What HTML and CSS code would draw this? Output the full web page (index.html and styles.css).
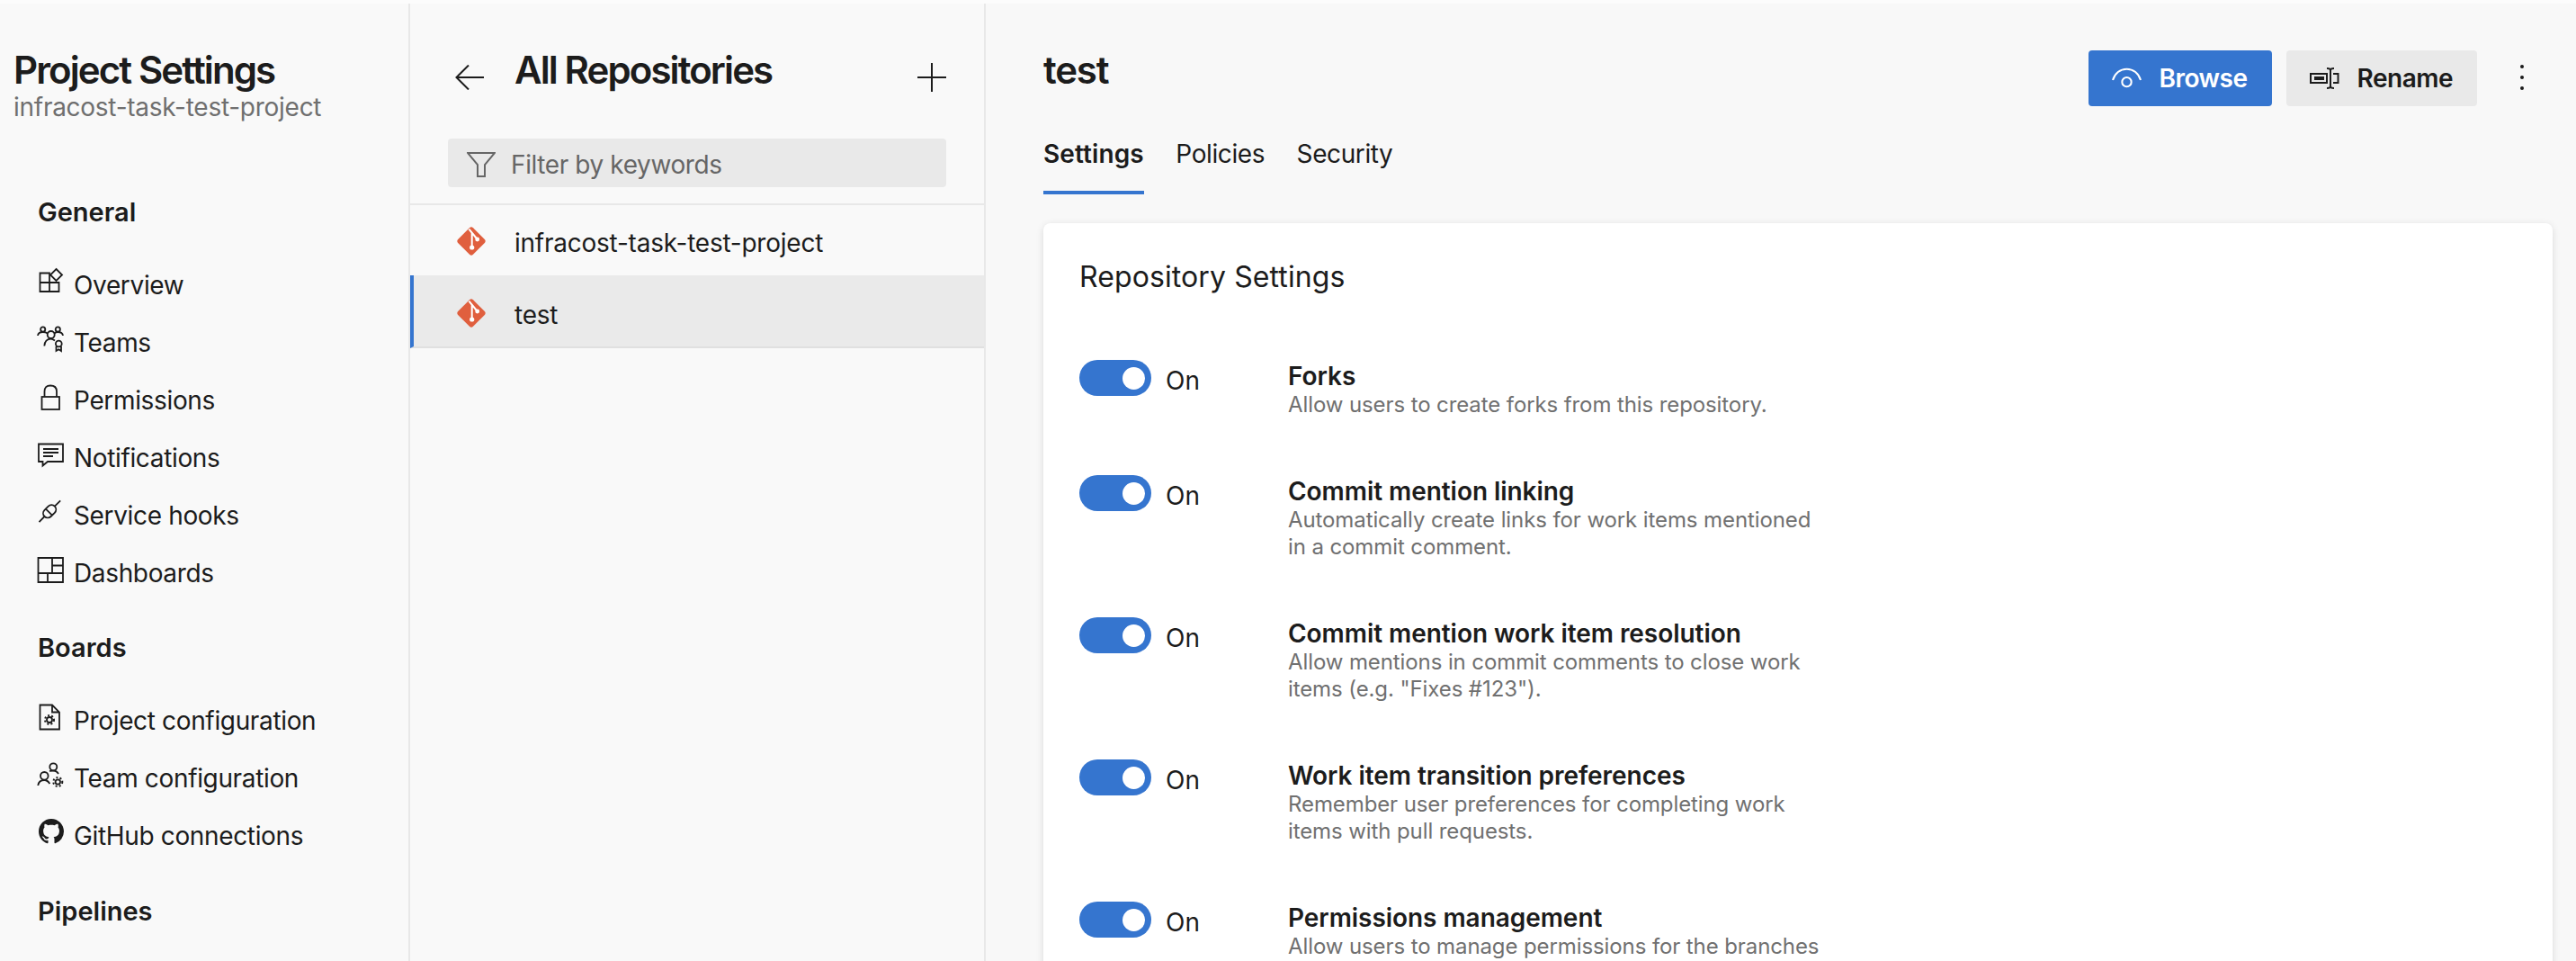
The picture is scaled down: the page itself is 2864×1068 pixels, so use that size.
FILE: index.html
```html
<!DOCTYPE html>
<html lang="en">
<head>
  <meta charset="UTF-8" />
  <title>Repository Settings</title>
  <link rel="stylesheet" href="styles.css">
</head>
<body>

<div class="app">
  <div class="sidebar">
    <div class="project-title">Project Settings</div>
    <div class="project-name">infracost-task-test-project</div>

    <div class="nav-heading first">General</div>
    <a class="nav-item">
      <svg class="nav-icon" viewBox="0 0 28 28"><path d="M1.500 5.500H12V16H22.500V26H1.500Z M1.500 16H12 M12 16V26"/><path d="M19.500 1L26 7.500L19.500 14L13 7.500Z"/></svg>
      Overview
    </a>
    <a class="nav-item">
      <svg class="nav-icon" viewBox="0 0 28 28"><circle cx="4.700" cy="4" r="2.600"/><circle cx="21.300" cy="4" r="2.600"/><circle cx="13.700" cy="10" r="4"/><circle cx="22.300" cy="20" r="3.400"/><path d="M-1 11Q-.5 7 4.700 7Q8 7 9.800 8.500M27 11Q26.500 7 21.300 7Q19 7 17.500 8.500M6.300 22.500Q7 14.700 13.500 14.700Q15.500 14.700 18 16.500M19.500 23V28L22.300 26.300L25 28V23"/></svg>
      Teams
    </a>
    <a class="nav-item">
      <svg class="nav-icon" viewBox="0 0 28 28"><rect x="3.500" y="15" width="19.500" height="14"/><path d="M6.500 15V9Q6.500 2.500 13 2.500Q20 2.500 20 9V15"/></svg>
      Permissions
    </a>
    <a class="nav-item">
      <svg class="nav-icon" viewBox="0 0 28 28"><path d="M0 3.500H27V23H10L4.500 27.500V23H0Z M5 9H22 M5 13H22 M5 17H16"/></svg>
      Notifications
    </a>
    <a class="nav-item">
      <svg class="nav-icon" viewBox="0 0 28 28"><g transform="rotate(-45 12.5 14)"><rect x="4" y="9" width="16" height="10" rx="5"/><path d="M11 9V19 M-4.500 14H4 M20 14H29"/></g></svg>
      Service hooks
    </a>
    <a class="nav-item">
      <svg class="nav-icon" viewBox="0 0 28 28"><path d="M-.5 2H27V29H-.5Z M15 2V19 M-.5 19H27 M15 10.500H27 M10 19V29"/></svg>
      Dashboards
    </a>

    <div class="nav-heading">Boards</div>
    <a class="nav-item">
      <svg class="nav-icon" viewBox="0 0 28 28"><path d="M1.500 1.500H15L23 9.500V28.500H1.500Z M15 1.500V9.500H23"/><circle cx="12" cy="18" r="3"/><circle class="teeth" cx="12" cy="18" r="5"/></svg>
      Project configuration
    </a>
    <a class="nav-item">
      <svg class="nav-icon" viewBox="0 0 28 28"><circle cx="16.300" cy="6.300" r="4"/><circle cx="6.300" cy="16.300" r="4.300"/><path d="M-.7 27Q0 21 6.300 21Q10 21 12.300 25M12 11Q14 10.500 16.300 10.500Q20 10.500 22 14"/><circle cx="21.300" cy="23" r="2.700"/><circle class="teeth" cx="21.300" cy="23" r="5"/></svg>
      Team configuration
    </a>
    <a class="nav-item">
      <svg class="nav-icon solid" viewBox="0 0 16 16"><path d="M8 0C3.58 0 0 3.58 0 8c0 3.54 2.29 6.53 5.47 7.59.4.07.55-.17.55-.38 0-.19-.01-.82-.01-1.49-2.01.37-2.53-.49-2.69-.94-.09-.23-.48-.94-.82-1.13-.28-.15-.68-.52-.01-.53.63-.01 1.08.58 1.23.82.72 1.21 1.87.87 2.33.66.07-.52.28-.87.51-1.07-1.78-.2-3.64-.89-3.64-3.95 0-.87.31-1.59.82-2.15-.08-.2-.36-1.02.08-2.12 0 0 .67-.21 2.2.82.64-.18 1.32-.27 2-.27.68 0 1.36.09 2 .27 1.53-1.04 2.2-.82 2.2-.82.44 1.1.16 1.92.08 2.12.51.56.82 1.27.82 2.15 0 3.07-1.87 3.75-3.65 3.95.29.25.54.73.54 1.48 0 1.07-.01 1.93-.01 2.2 0 .21.15.46.55.38A8.013 8.013 0 0016 8c0-4.42-3.58-8-8-8z"/></svg>
      GitHub connections
    </a>

    <div class="nav-heading">Pipelines</div>
  </div>

  <div class="repo-panel">
    <div class="repo-head">
      <svg class="back-icon" viewBox="0 0 32 28"><path d="M32 14H1.500M15 .5L1.500 14L15 27.500"/></svg>
      <div class="repo-title">All Repositories</div>
      <svg class="add-icon" viewBox="0 0 32 32"><path d="M16 0V32M0 16H32"/></svg>
    </div>
    <div class="filter-wrap">
      <div class="filter-box">
        <svg class="filter-icon" viewBox="0 0 32 28"><path d="M1 1H31L20 14V27H12V14Z"/></svg>
        Filter by keywords
      </div>
    </div>
    <div class="repo-row">
      <svg class="git-icon" viewBox="0 0 32 32"><path class="git-mark" d="M14 1.200Q16 -.6 18 1.200L30.800 14Q32.600 16 30.800 18L18 30.800Q16 32.600 14 30.800L1.200 18Q-.6 16 1.200 14Z"/><path class="git-branch" d="M16.700 6.600V23M13.400 2.600L22.700 14"/><circle class="git-dot" cx="16.700" cy="23" r="2.600"/><circle class="git-dot" cx="22.700" cy="14" r="2.400"/></svg>
      infracost-task-test-project
    </div>
    <div class="repo-row selected">
      <svg class="git-icon" viewBox="0 0 32 32"><path class="git-mark" d="M14 1.200Q16 -.6 18 1.200L30.800 14Q32.600 16 30.800 18L18 30.800Q16 32.600 14 30.800L1.200 18Q-.6 16 1.200 14Z"/><path class="git-branch" d="M16.700 6.600V23M13.400 2.600L22.700 14"/><circle class="git-dot" cx="16.700" cy="23" r="2.600"/><circle class="git-dot" cx="22.700" cy="14" r="2.400"/></svg>
      test
    </div>
  </div>

  <div class="content">
    <div class="content-head">
      <div class="page-title">test</div>
      <div class="actions">
        <a class="btn primary">
          <svg class="btn-icon" viewBox="0 0 32 22"><path d="M1 13C3 5.500 9 1 16 1C23 1 29 5.500 31 13"/><circle cx="16" cy="15" r="5"/></svg>
          Browse
        </a>
        <a class="btn">
          <svg class="btn-icon" viewBox="0 0 33 24"><path d="M1 7H19V17H1Z"/><path class="fill" d="M5 10H16V14H5Z"/><path d="M19 1Q23 1 23 3V21Q23 23 19 23M27 1Q23 1 23 3M27 23Q23 23 23 21M26 7H31.500V17H26"/></svg>
          Rename
        </a>
        <div class="more"><span></span><span></span><span></span></div>
      </div>
    </div>

    <div class="tabs">
      <a class="tab active">Settings</a>
      <a class="tab">Policies</a>
      <a class="tab">Security</a>
    </div>

    <div class="card">
      <h2>Repository Settings</h2>
      <div class="setting">
        <div class="toggle-wrap"><span class="toggle"></span><span class="toggle-label">On</span></div>
        <div class="setting-text">
          <div class="setting-name">Forks</div>
          <div class="setting-desc">Allow users to create forks from this repository.</div>
        </div>
      </div>
      <div class="setting">
        <div class="toggle-wrap"><span class="toggle"></span><span class="toggle-label">On</span></div>
        <div class="setting-text">
          <div class="setting-name">Commit mention linking</div>
          <div class="setting-desc">Automatically create links for work items mentioned in a commit comment.</div>
        </div>
      </div>
      <div class="setting">
        <div class="toggle-wrap"><span class="toggle"></span><span class="toggle-label">On</span></div>
        <div class="setting-text">
          <div class="setting-name">Commit mention work item resolution</div>
          <div class="setting-desc">Allow mentions in commit comments to close work items (e.g. "Fixes #123").</div>
        </div>
      </div>
      <div class="setting">
        <div class="toggle-wrap"><span class="toggle"></span><span class="toggle-label">On</span></div>
        <div class="setting-text">
          <div class="setting-name">Work item transition preferences</div>
          <div class="setting-desc">Remember user preferences for completing work items with pull requests.</div>
        </div>
      </div>
      <div class="setting">
        <div class="toggle-wrap"><span class="toggle"></span><span class="toggle-label">On</span></div>
        <div class="setting-text">
          <div class="setting-name">Permissions management</div>
          <div class="setting-desc">Allow users to manage permissions for the branches</div>
        </div>
      </div>
    </div>
  </div>
</div>

</body>
</html>
```

FILE: styles.css
```css
body {
  margin: 0;
  font-family: Inter, 'Noto Sans', sans-serif;
  font-size: 28px;
  color: #1c1c1c;
  background-color: #f9f9f9;
}

.app {
  display: flex;
  height: 1068px;
  overflow: hidden;
  border-top: 4px solid #fcfcfc;
  box-sizing: border-box;
}

/* left nav */
.sidebar {
  width: 456px;
  flex-shrink: 0;
  box-sizing: border-box;
  border-right: 2px solid #e8e8e8;
  padding-top: 50px;
}

.project-title {
  margin-left: 15px;
  font-size: 42px;
  line-height: 48px;
  font-weight: 600;
  letter-spacing: -1.9px;
}

.project-name {
  margin-left: 15px;
  line-height: 34px;
  letter-spacing: -0.27px;
  color: #6f6f6f;
}

.nav-heading {
  margin: 31px 0 0 42px;
  font-size: 29px;
  line-height: 40px;
  font-weight: 600;
}

.nav-heading.first {
  margin-top: 80px;
}

.nav-heading:last-child {
  margin-top: 32px;
}

.nav-item {
  display: flex;
  align-items: center;
  height: 64px;
  margin-left: 43px;
  letter-spacing: -0.35px;
}

.nav-heading + .nav-item {
  margin-top: 29px;
}

.nav-icon {
  width: 28px;
  height: 28px;
  margin: 0 11px 10px 0;
  overflow: visible;
  fill: none;
  stroke: #1c1c1c;
  stroke-width: 1.8;
}

.nav-icon.solid {
  fill: #1c1c1c;
  stroke: none;
}

.nav-icon .teeth {
  stroke-width: 2;
  stroke-dasharray: 2 2.2;
}

/* repo list */
.repo-panel {
  width: 640px;
  flex-shrink: 0;
  box-sizing: border-box;
  border-right: 2px solid #e8e8e8;
}

.repo-head {
  display: flex;
  align-items: flex-start;
  padding: 50px 42px 0 50px;
  height: 100px;
  box-sizing: border-box;
}

.back-icon {
  width: 32px;
  height: 28px;
  margin-top: 18px;
  fill: none;
  stroke: #1c1c1c;
  stroke-width: 2;
}

.repo-title {
  flex: 1;
  margin-left: 34px;
  font-size: 42px;
  line-height: 48px;
  font-weight: 600;
  letter-spacing: -1.9px;
}

.add-icon {
  width: 32px;
  height: 32px;
  margin-top: 16px;
  fill: none;
  stroke: #1c1c1c;
  stroke-width: 2;
}

.filter-wrap {
  padding: 50px 42px 18px;
  border-bottom: 2px solid #e8e8e8;
}

.filter-box {
  display: flex;
  align-items: center;
  height: 54px;
  box-sizing: border-box;
  padding: 3px 0 0 21px;
  background-color: #e9e9e9;
  border-radius: 4px;
  letter-spacing: -0.4px;
  color: #666;
}

.filter-icon {
  width: 32px;
  height: 28px;
  margin-right: 17px;
  fill: none;
  stroke: #666;
  stroke-width: 2;
}

.repo-row {
  display: flex;
  align-items: center;
  height: 78px;
  box-sizing: border-box;
  padding: 6px 0 0 52px;
  letter-spacing: -0.24px;
}

.repo-row.selected {
  height: 81px;
  background-color: #eaeaea;
  border-left: 4px solid #3575cf;
  border-bottom: 2px solid #e0e0e0;
  padding: 8px 0 0 48px;
}

.git-icon {
  width: 32px;
  height: 32px;
  margin: 0 32px 0 0;
  transform: translateY(-2px);
  overflow: visible;
}

.git-mark {
  fill: #e05f3e;
}

.git-branch {
  fill: none;
  stroke: #fff;
  stroke-width: 2;
}

.git-dot {
  fill: #fff;
}

/* main content */
.content {
  flex: 1;
  padding: 0 26px 0 64px;
  background-color: #f8f8f8;
}

.content-head {
  display: flex;
  justify-content: space-between;
  height: 122px;
  padding-top: 52px;
  box-sizing: border-box;
}

.page-title {
  margin-top: -2px;
  font-size: 42px;
  line-height: 48px;
  font-weight: 600;
  letter-spacing: -1.2px;
}

.actions {
  display: flex;
  align-items: flex-start;
  gap: 16px;
  margin-right: 18px;
}

.btn {
  display: flex;
  align-items: center;
  height: 62px;
  padding: 0 27px 0 26px;
  background-color: #e9e9e9;
  border-radius: 4px;
  font-weight: 600;
  letter-spacing: -0.5px;
  color: #1c1c1c;
}

.btn.primary {
  background-color: #3575cf;
  color: #fff;
}

.btn-icon {
  width: 33px;
  height: 24px;
  margin-right: 20px;
  fill: none;
  stroke: #1c1c1c;
  stroke-width: 2;
}

.btn.primary .btn-icon {
  stroke: #fff;
}

.btn-icon .fill {
  fill: #1c1c1c;
  stroke: none;
}

.more {
  display: flex;
  flex-direction: column;
  gap: 8px;
  padding: 16px 14px 0 32px;
}

.more span {
  width: 4px;
  height: 4px;
  border-radius: 50%;
  background-color: #1c1c1c;
}

.tabs {
  display: flex;
  gap: 35.5px;
  height: 90px;
  box-sizing: border-box;
}

.tab {
  height: 90px;
  box-sizing: border-box;
  padding-top: 28px;
  line-height: 34px;
  letter-spacing: -0.4px;
}

.tab.active {
  font-weight: 600;
  letter-spacing: 0.1px;
  border-bottom: 4px solid #3575cf;
}

.card {
  margin-top: 32px;
  padding: 40px 40px 60px;
  background-color: #fff;
  border-radius: 8px;
  box-shadow: 0 2px 8px rgba(0, 0, 0, 0.12);
}

.card h2 {
  margin: 0 0 72px;
  font-size: 32px;
  line-height: 40px;
  font-weight: 400;
  letter-spacing: 0.1px;
}

.setting {
  display: flex;
  margin-bottom: 63px;
}

.toggle-wrap {
  display: flex;
  align-items: center;
  align-self: flex-start;
  gap: 16px;
  width: 232px;
  height: 40px;
}

.toggle {
  position: relative;
  display: block;
  width: 80px;
  height: 40px;
  border-radius: 20px;
  background-color: #3575cf;
}

.toggle::after {
  content: "";
  position: absolute;
  top: 8px;
  right: 7px;
  width: 25px;
  height: 25px;
  border-radius: 50%;
  background-color: #fff;
}

.toggle-label {
  margin-top: 5px;
}

.setting-name {
  padding-top: 1px;
  line-height: 34px;
  font-weight: 600;
  letter-spacing: -0.05px;
}

.setting-desc {
  width: 600px;
  font-size: 24px;
  line-height: 30px;
  letter-spacing: -0.1px;
  color: #707070;
}
```
